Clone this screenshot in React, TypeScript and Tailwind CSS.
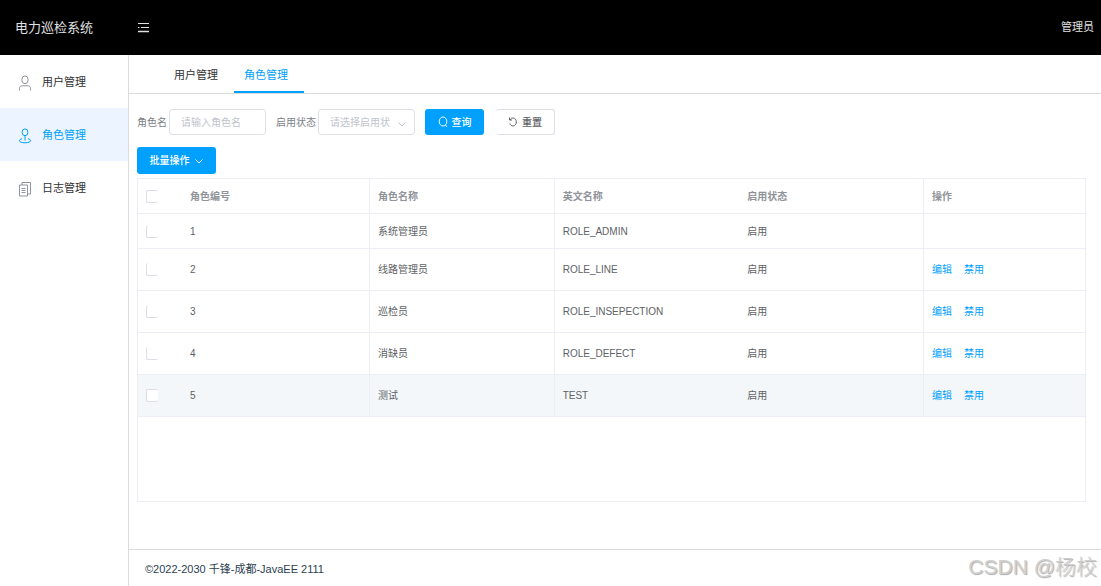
import type { ReactNode } from "react";
import clsx from "clsx";

const menuItems = [
  { label: "用户管理", icon: UserIcon, active: false },
  { label: "角色管理", icon: RoleIcon, active: true },
  { label: "日志管理", icon: LogIcon, active: false },
];

const roles = [
  { id: 1, name: "系统管理员", code: "ROLE_ADMIN", status: "启用", locked: true },
  { id: 2, name: "线路管理员", code: "ROLE_LINE", status: "启用" },
  { id: 3, name: "巡检员", code: "ROLE_INSEPECTION", status: "启用" },
  { id: 4, name: "消缺员", code: "ROLE_DEFECT", status: "启用" },
  { id: 5, name: "测试", code: "TEST", status: "启用", current: true },
];

function UserIcon() {
  return (
    <svg viewBox="0 0 14 16" className="h-4 w-3.5" fill="none" stroke="currentColor">
      <ellipse cx="7" cy="4.800" rx="3.200" ry="3.900" />
      <path d="M1.500 15.500v-2c0-1.800 1-2.700 2.800-2.700h5.400c1.800 0 2.800.9 2.800 2.700v2" />
    </svg>
  );
}

function RoleIcon() {
  return (
    <svg viewBox="0 0 14 16" className="h-4 w-3.5" fill="none" stroke="currentColor">
      <ellipse cx="7" cy="4.300" rx="2.900" ry="3.400" />
      <path d="M7 7.700v4.800M4 10.800c-1.600.3-2.600.9-2.600 1.800 0 1.300 2.400 2.200 5.600 2.200s5.600-.9 5.600-2.200c0-.9-1-1.500-2.600-1.800" />
    </svg>
  );
}

function LogIcon() {
  return (
    <svg viewBox="0 0 14 16" className="h-4 w-3.5" fill="none" stroke="currentColor">
      <path d="M1.500 4h8v11h-8zM4 4V1.500h8.500v11.500h-3M3.500 7.500h4M3.500 9.500h4M3.500 11.500h4" />
    </svg>
  );
}

function ChevronIcon({ className }: { className?: string }) {
  return (
    <svg viewBox="0 0 10 10" className={clsx("size-2.5", className)} fill="none" stroke="currentColor">
      <path d="M1.500 3.500l3.500 3.500 3.500-3.500" />
    </svg>
  );
}

function Checkbox({ label, full }: { label: string; full?: boolean }) {
  return (
    <input
      type="checkbox"
      aria-label={label}
      className={clsx(
        "block h-[13px] w-3 appearance-none rounded-xs border-b border-l border-[#dcdfe6] bg-white checked:bg-[#00a0ff]",
        full && "border-t",
      )}
    />
  );
}

function Cell({ children, divided }: { children?: ReactNode; divided?: boolean }) {
  return <td className={clsx("border-b border-[#ebeef5] px-2", divided && "border-r")}>{children}</td>;
}

function HeadCell({ children, divided }: { children?: ReactNode; divided?: boolean }) {
  return (
    <th className={clsx("border-b border-[#ebeef5] px-2 text-left font-bold", divided && "border-r")}>
      {children}
    </th>
  );
}

function RoleTable() {
  return (
    <div className="mt-1 min-h-[324px] border border-[#ebeef5]">
      <table className="w-full table-fixed border-separate border-spacing-0 text-[10px] text-[#606266]">
        <colgroup>
          <col className="w-11" />
          <col className="w-[188px]" />
          <col />
          <col />
          <col />
          <col className="w-[161px]" />
        </colgroup>
        <thead className="text-[#909399]">
          <tr className="h-[35px]">
            <HeadCell>
              <Checkbox label="全选" full />
            </HeadCell>
            <HeadCell divided>角色编号</HeadCell>
            <HeadCell divided>角色名称</HeadCell>
            <HeadCell>英文名称</HeadCell>
            <HeadCell divided>启用状态</HeadCell>
            <HeadCell>操作</HeadCell>
          </tr>
        </thead>
        <tbody>
          {roles.map((role) => (
            <tr
              key={role.id}
              className={clsx(role.locked ? "h-[35px]" : "h-[42px]", role.current && "bg-[#f3f7fa]")}
            >
              <Cell>
                <Checkbox label={`选择${role.name}`} full={role.current} />
              </Cell>
              <Cell divided>{role.id}</Cell>
              <Cell divided>{role.name}</Cell>
              <Cell>{role.code}</Cell>
              <Cell divided>{role.status}</Cell>
              <Cell>
                {!role.locked && (
                  <div className="flex gap-3 text-[#00a0ff]">
                    <button type="button">编辑</button>
                    <button type="button">禁用</button>
                  </div>
                )}
              </Cell>
            </tr>
          ))}
        </tbody>
      </table>
    </div>
  );
}

function FilterBar() {
  return (
    <form className="flex items-center text-[10px] text-[#606266]">
      <label htmlFor="role-name" className="w-8 whitespace-nowrap text-[#7d8086]">
        角色名
      </label>
      <input
        id="role-name"
        placeholder="请输入角色名"
        className="h-[26px] w-[97px] rounded-[3px] border border-[#dcdfe6] px-[11px] outline-none placeholder:text-[#c0c4cc]"
      />
      <label htmlFor="role-status" className="ml-2.5 w-[42px] whitespace-nowrap text-[#7d8086]">
        启用状态
      </label>
      <div className="relative">
        <select
          id="role-status"
          className="block h-[26px] w-[97px] appearance-none rounded-[3px] border border-[#dcdfe6] bg-white pr-6 pl-[11px] text-[#c0c4cc] outline-none"
        >
          <option>请选择启用状态</option>
        </select>
        <ChevronIcon className="pointer-events-none absolute top-2.5 right-2 text-[#c0c4cc]" />
      </div>
      <button
        type="button"
        className="ml-2.5 flex h-[26px] w-[59px] items-center justify-center gap-1 rounded-[3px] bg-[#00a0ff] font-medium text-white"
      >
        <svg viewBox="0 0 10 12" className="h-3 w-2.5" fill="none" stroke="currentColor">
          <ellipse cx="5" cy="5.500" rx="3.800" ry="4.500" />
          <path d="M7.500 9l1.500 2" />
        </svg>
        查询
      </button>
      <button
        type="reset"
        className="ml-3 flex h-[26px] w-[59px] items-center justify-center gap-1 rounded-[3px] border border-l-0 border-[#dcdfe6] font-medium"
      >
        <svg viewBox="0 0 10 12" className="h-3 w-2.5" fill="none" stroke="currentColor">
          <path d="M1.500 1.500v2.500h2.500M2 4C2.800 2.600 3.900 2 5.100 2c2 0 3.200 1.700 3.200 4s-1.200 4-3.200 4c-1.500 0-2.800-.9-3.200-2.600" />
        </svg>
        重置
      </button>
    </form>
  );
}

export default function App() {
  return (
    <div className="relative flex min-h-screen flex-col bg-white font-['Liberation_Sans','Noto_Sans_CJK_SC',sans-serif] text-[11px] text-[#303133]">
      <header className="flex h-[55px] items-center bg-black pr-[7px] pl-[15px] text-[#e0e0e0]">
        <h1 className="w-[123px] text-[13px]">电力巡检系统</h1>
        <button type="button" aria-label="折叠菜单">
          <svg viewBox="0 0 11 10" className="h-2.5 w-[11px]" fill="none" stroke="currentColor">
            <path d="M0 .500h11M0 4.500h1.500M3 4.500h8" />
            <path d="M0 8.500h11" strokeWidth="1.500" />
          </svg>
        </button>
        <span className="ml-auto">管理员</span>
      </header>

      <div className="flex flex-1">
        <nav className="w-[129px] shrink-0 border-r border-[#dcdcdc]">
          {menuItems.map((item) => {
            const Icon = item.icon;

            return (
              <a
                key={item.label}
                href="#"
                className={clsx(
                  "flex h-[53px] items-center gap-2.5 pt-0.5 pl-[18px]",
                  item.active && "bg-[#ecf5ff] text-[#00a0ff]",
                )}
              >
                <span className={item.active ? "text-[#00a0ff]" : "text-[#909399]"}>
                  <Icon />
                </span>
                {item.label}
              </a>
            );
          })}
        </nav>

        <div className="flex min-w-0 flex-1 flex-col">
          <div className="flex h-[39px] border-b border-[#dcdcdc] pl-[35px]">
            <a href="#" className="flex items-center border-b-2 border-transparent pt-1 pr-4 pl-2.5">
              用户管理
            </a>
            <a href="#" className="flex items-center border-b-2 border-[#00a0ff] pt-1 pr-4 pl-2.5 text-[#00a0ff]">
              角色管理
            </a>
          </div>

          <main className="flex-1 pt-[15px] pr-[15px] pl-2">
            <FilterBar />
            <button
              type="button"
              className="mt-3 flex h-[27px] w-[79px] items-center justify-center gap-1 rounded-[3px] bg-[#00a0ff] text-[10px] font-medium text-white"
            >
              批量操作
              <ChevronIcon />
            </button>
            <RoleTable />
          </main>

          <footer className="flex h-[37px] items-center border-t border-[#dcdcdc] pt-0.5 pl-4 text-[#2c3e50]">
            ©2022-2030 千锋-成都-JavaEE 2111
          </footer>
        </div>
      </div>

      <span className="pointer-events-none absolute right-1 bottom-1 text-[21px] font-light text-[#d0d0d0] [text-shadow:1px_1px_1px_#aaa]">
        CSDN @杨校
      </span>
    </div>
  );
}
